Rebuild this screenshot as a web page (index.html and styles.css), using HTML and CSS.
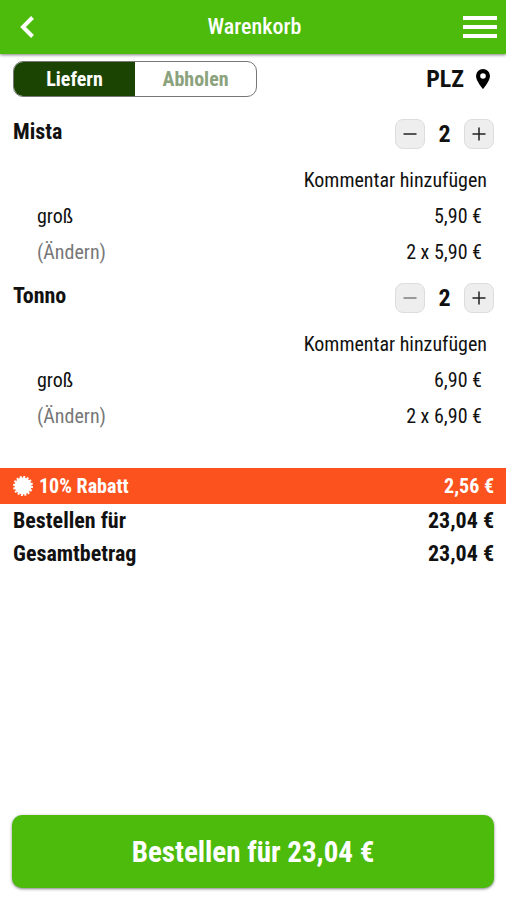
FILE: index.html
```html
<!DOCTYPE html>
<html lang="de">
  <head>
    <meta charset="utf-8" />
    <meta name="viewport" content="width=device-width, initial-scale=1" />
    <title>Warenkorb</title>
    <link rel="stylesheet" href="styles.css">
  </head>
  <body>
    <header class="topbar">
      <button class="icon-button" type="button" aria-label="Zurück">
        <svg width="28" height="28" viewBox="0 0 28 28">
          <path d="M20.500 4.500L11 14l9.500 9.500" fill="none" stroke="#fff" stroke-width="4" />
        </svg>
      </button>
      <h1>Warenkorb</h1>
      <button class="icon-button" type="button" aria-label="Menü">
        <svg width="34" height="24" viewBox="0 0 34 24">
          <path d="M0 3h34M0 12h34M0 21h34" stroke="#fff" stroke-width="4" />
        </svg>
      </button>
    </header>

    <main>
      <div class="options">
        <div class="toggle">
          <button class="active" type="button" aria-pressed="true">Liefern</button>
          <button type="button" aria-pressed="false">Abholen</button>
        </div>
        <button class="plz" type="button">
          PLZ
          <svg width="14" height="20" viewBox="0 0 14 20">
            <path fill-rule="evenodd" d="M7 0a7 7 0 0 0-7 7c0 5 7 13 7 13s7-8 7-13a7 7 0 0 0-7-7zm0 4.200a2.800 2.800 0 1 1 0 5.600 2.800 2.800 0 0 1 0-5.600z" />
          </svg>
        </button>
      </div>

      <section class="item">
        <div class="item-head">
          <h2>Mista</h2>
          <div class="stepper">
            <button type="button" aria-label="Weniger">
              <svg width="14" height="14" viewBox="0 0 14 14"><path d="M.500 7h13" /></svg>
            </button>
            <span>2</span>
            <button type="button" aria-label="Mehr">
              <svg width="14" height="14" viewBox="0 0 14 14"><path d="M.500 7h13M7 .500v13" /></svg>
            </button>
          </div>
        </div>
        <div class="comment"><a href="#">Kommentar hinzufügen</a></div>
        <div class="detail"><span>groß</span><span>5,90 €</span></div>
        <div class="detail"><a class="change" href="#">(Ändern)</a><span>2 x 5,90 €</span></div>
      </section>

      <section class="item">
        <div class="item-head">
          <h2>Tonno</h2>
          <div class="stepper">
            <button class="faded" type="button" aria-label="Weniger">
              <svg width="14" height="14" viewBox="0 0 14 14"><path d="M.500 7h13" /></svg>
            </button>
            <span>2</span>
            <button type="button" aria-label="Mehr">
              <svg width="14" height="14" viewBox="0 0 14 14"><path d="M.500 7h13M7 .500v13" /></svg>
            </button>
          </div>
        </div>
        <div class="comment"><a href="#">Kommentar hinzufügen</a></div>
        <div class="detail"><span>groß</span><span>6,90 €</span></div>
        <div class="detail"><a class="change" href="#">(Ändern)</a><span>2 x 6,90 €</span></div>
      </section>

      <div class="discount">
        <svg width="20" height="20" viewBox="0 0 20 20">
          <circle cx="10" cy="10" r="8.500" fill="#fff" />
          <circle cx="10" cy="10" r="9" fill="none" stroke="#fff" stroke-width="2" stroke-dasharray="2 1.534" />
        </svg>
        <span>10% Rabatt</span>
        <span class="amount">2,56 €</span>
      </div>
      <div class="total"><span>Bestellen für</span><span>23,04 €</span></div>
      <div class="total"><span>Gesamtbetrag</span><span>23,04 €</span></div>
    </main>

    <footer>
      <button class="order" type="button">Bestellen für 23,04 €</button>
    </footer>
  </body>
</html>
```
FILE: styles.css
```css
* {
  box-sizing: border-box;
}
body {
  display: flex;
  flex-direction: column;
  min-height: 100vh;
  margin: 0;
  font-family: "Roboto Condensed", "Liberation Sans Narrow", Roboto, sans-serif;
  font-size: 20px;
  line-height: 24px;
  color: #111;
  background-color: #fff;
}
button {
  padding: 0;
  border: none;
  background: none;
  font: inherit;
  color: inherit;
  cursor: pointer;
}
a {
  color: inherit;
  text-decoration: none;
}
svg {
  display: block;
}
h1,
h2 {
  margin: 0;
  font-size: 22px;
  line-height: 26px;
}
main {
  flex: 1;
}
.topbar {
  display: grid;
  grid-template-columns: 34px 1fr 34px;
  align-items: center;
  height: 54px;
  padding: 0 9px 0 12px;
  color: #fff;
  background-color: #4cbb0c;
  box-shadow: 0 1px 3px rgba(0, 0, 0, 0.5);
}
.topbar h1 {
  font-weight: 500;
  text-align: center;
}
.options {
  display: flex;
  justify-content: space-between;
  padding: 7px 16px 22px 13px;
}
.toggle {
  display: grid;
  grid-template-columns: 1fr 1fr;
  width: 244px;
  height: 36px;
  border: 1px solid #777;
  border-radius: 10px;
  overflow: hidden;
  font-weight: bold;
  color: #8ba27d;
}
.toggle .active {
  color: #fff;
  background-color: #1b4302;
}
.plz {
  display: flex;
  align-items: center;
  gap: 12px;
  font-size: 24px;
  font-weight: bold;
}
.item {
  padding: 0 12px 13px 13px;
}
.item-head {
  display: flex;
  justify-content: space-between;
  align-items: flex-start;
  height: 43px;
}
.stepper {
  display: flex;
  height: 30px;
  align-items: center;
}
.stepper span {
  width: 39px;
  font-size: 24px;
  font-weight: bold;
  text-align: center;
}
.stepper button {
  display: flex;
  align-items: center;
  justify-content: center;
  width: 30px;
  height: 30px;
  border: 1px solid #ddd;
  border-radius: 8px;
  background-color: #eee;
}
.stepper path {
  stroke: #222;
  stroke-width: 1.5;
}
.stepper .faded path {
  stroke: #999;
  stroke-width: 2;
}
.comment {
  padding: 6px 7px;
  text-align: right;
}
.detail {
  display: flex;
  justify-content: space-between;
  padding: 6px 12px 6px 24px;
}
.change {
  color: #777;
}
.discount {
  display: flex;
  align-items: center;
  gap: 6px;
  height: 36px;
  margin-top: 21px;
  padding: 0 12px 0 13px;
  font-weight: bold;
  color: #fff;
  background-color: #fc521e;
}
.discount .amount {
  margin-left: auto;
}
.total {
  display: flex;
  align-items: center;
  justify-content: space-between;
  height: 33px;
  padding: 0 12px 0 13px;
  font-size: 22px;
  font-weight: bold;
}
footer {
  padding: 12px;
}
.order {
  width: 100%;
  height: 73px;
  border-radius: 10px;
  font-size: 29px;
  font-weight: bold;
  color: #fff;
  background-color: #4cbb0c;
  box-shadow: 0 1px 3px rgba(0, 0, 0, 0.5);
}
```
